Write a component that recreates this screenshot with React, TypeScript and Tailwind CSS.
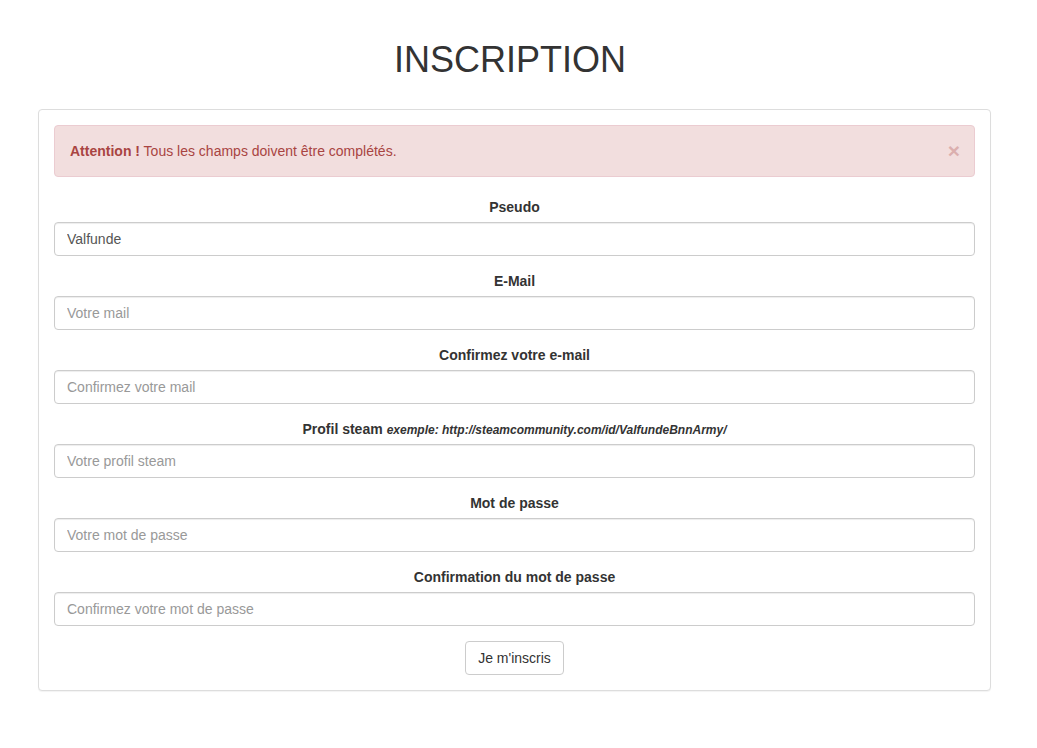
import React from 'react'

const fields = [
  { label: 'Pseudo', placeholder: 'Votre pseudo', value: 'Valfunde' },
  { label: 'E-Mail', placeholder: 'Votre mail' },
  { label: 'Confirmez votre e-mail', placeholder: 'Confirmez votre mail' },
  {
    label: 'Profil steam',
    hint: 'exemple: http://steamcommunity.com/id/ValfundeBnnArmy/',
    placeholder: 'Votre profil steam',
  },
  { label: 'Mot de passe', placeholder: 'Votre mot de passe', type: 'password' },
  { label: 'Confirmation du mot de passe', placeholder: 'Confirmez votre mot de passe', type: 'password' },
]

export default function App() {
  return (
    <div className="min-h-[748px] bg-white font-['Liberation_Sans',Arial,sans-serif] text-[14px] leading-[20px] text-[#333]">
      <h1 className="pt-[40px] pr-[17px] text-center text-[36px] leading-[40px] font-normal text-[#333]">INSCRIPTION</h1>

      {/* Panel */}
      <div className="ml-[38px] mt-[29px] w-[953px] rounded-[4px] border border-[#ddd] bg-white p-[15px] shadow-[0_1px_1px_rgba(0,0,0,0.05)]">
        {/* Alert */}
        <div className="mb-[20px] flex items-center justify-between rounded-[4px] border border-[#ebccd1] bg-[#f2dede] py-[15px] pl-[15px] pr-[14px] text-[#a94442]">
          <p>
            <strong className="font-bold">Attention !</strong> Tous les champs doivent être complétés.
          </p>
          <button className="h-[20px] text-[21px] font-bold leading-[20px] text-[#a94442] opacity-30">×</button>
        </div>

        <form className="flex flex-col" onSubmit={(e) => e.preventDefault()}>
          {fields.map((f) => (
            <div key={f.label} className="mb-[15px] flex flex-col">
              <label className="mb-[5px] h-[20px] text-center font-bold">
                {f.label}
                {f.hint && <small className="ml-[4px] text-[12px] leading-none italic">{f.hint}</small>}
              </label>
              <input
                type={f.type ?? 'text'}
                defaultValue={f.value}
                placeholder={f.placeholder}
                className="h-[34px] w-full rounded-[4px] border border-[#ccc] px-[12px] py-[6px] text-[14px] text-[#555] shadow-[inset_0_1px_1px_rgba(0,0,0,0.075)] outline-none placeholder:text-[#999]"
              />
            </div>
          ))}
          <div className="flex justify-center">
            <button
              type="submit"
              className="h-[34px] rounded-[4px] border border-[#ccc] bg-white px-[12px] py-[6px] text-[14px] text-[#333]"
            >
              Je m'inscris
            </button>
          </div>
        </form>
      </div>
    </div>
  )
}
